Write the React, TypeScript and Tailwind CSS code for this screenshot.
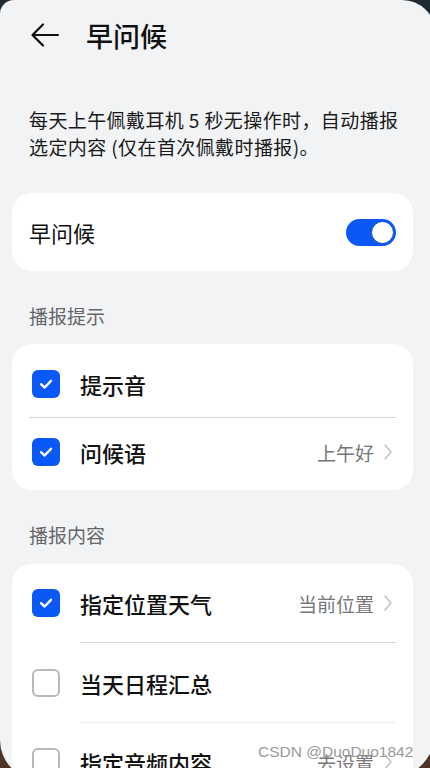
import React from "react";

const font = { fontFamily: '"Noto Sans CJK SC", "Noto Sans", sans-serif' };

function Check({ checked }: { checked: boolean }) {
  if (checked) {
    return (
      <div className="w-[28px] h-[28px] rounded-[6px] bg-[#0a59f7] flex items-center justify-center shrink-0">
        <svg width="18" height="18" viewBox="0 0 18 18" fill="none">
          <path d="M4 9.2 L7.6 12.5 L14 5.8" stroke="white" strokeWidth="2.4" strokeLinecap="round" strokeLinejoin="round" />
        </svg>
      </div>
    );
  }
  return <div className="w-[28px] h-[28px] rounded-[6px] border-2 border-[#b8b8b8] bg-white shrink-0" />;
}

function Chevron() {
  return (
    <svg width="10" height="18" viewBox="0 0 10 18" fill="none" className="ml-[9px]">
      <path d="M2 2 L8 9 L2 16" stroke="#c4c4c4" strokeWidth="1.6" strokeLinecap="round" strokeLinejoin="round" />
    </svg>
  );
}

function Row({ checked, label, value, h }: { checked: boolean; label: string; value?: string; h: string }) {
  return (
    <div className={`flex items-center pl-[20px] pr-[20px] ${h}`}>
      <Check checked={checked} />
      <span className="ml-[20px] text-[22px] font-medium text-[#111] leading-none">{label}</span>
      {value && (
        <div className="ml-auto flex items-center">
          <span className="text-[19px] text-[#777] leading-none">{value}</span>
          <Chevron />
        </div>
      )}
    </div>
  );
}

export default function App() {
  return (
    <div className="w-[430px] h-[768px] overflow-hidden bg-gradient-to-b from-[#1e2a34] via-[#2b2a2c] to-[#4e3426]" style={font}>
      <div className="relative w-[436px] h-[780px] bg-[#f1f3f5] rounded-tl-[14px] rounded-tr-[34px] rounded-bl-[40px] rounded-br-[50px] overflow-hidden">
        <div className="flex items-center h-[70px] pl-[30px]">
          <svg width="30" height="26" viewBox="0 0 30 26" fill="none">
            <path d="M28 13 H3 M13 2.5 L2.5 13 L13 23.5" stroke="#111" strokeWidth="2.2" strokeLinecap="round" strokeLinejoin="round" />
          </svg>
          <span className="ml-[26px] text-[27px] font-medium text-[#111] leading-none">早问候</span>
        </div>
        <p className="mt-[36px] px-[29px] text-[19px] leading-[27px] tracking-[0.4px] text-[#1a1a1a] whitespace-nowrap">
          <span className="block">每天上午佩戴耳机 5 秒无操作时，自动播报</span>
          <span className="block">选定内容 (仅在首次佩戴时播报)。</span>
        </p>
        <div className="mx-[12px] w-[401px] mt-[33px] h-[78px] rounded-[20px] bg-white flex items-center px-[17px]">
          <span className="text-[22px] text-[#111] leading-none">早问候</span>
          <div className="ml-auto w-[50px] h-[27px] rounded-full bg-[#0a59f7] flex items-center justify-end pr-[2px]">
            <div className="w-[23px] h-[23px] rounded-full bg-white border-[1.5px] border-[#0948c4]" />
          </div>
        </div>
        <div className="mt-[32px] px-[29px] text-[19px] text-[#666] leading-[25px] h-[25px]">播报提示</div>
        <div className="mx-[12px] w-[401px] mt-[16px] rounded-[20px] bg-white pt-[6px] pb-[4px]">
          <Row checked label="提示音" h="h-[67px]" />
          <div className="mx-[17px] h-px bg-[#d6d6d6]" />
          <Row checked label="问候语" value="上午好" h="h-[68px]" />
        </div>
        <div className="mt-[32px] px-[29px] text-[19px] text-[#666] leading-[25px] h-[25px]">播报内容</div>
        <div className="mx-[12px] w-[401px] mt-[17px] rounded-[20px] bg-white">
          <Row checked label="指定位置天气" value="当前位置" h="h-[78px]" />
          <div className="ml-[68px] mr-[17px] h-px bg-[#d6d6d6]" />
          <Row checked={false} label="当天日程汇总" h="h-[79px]" />
          <div className="ml-[68px] mr-[17px] h-px bg-[#eeeeee]" />
          <Row checked={false} label="指定音频内容" value="去设置" h="h-[78px]" />
        </div>
        <div className="absolute left-[258px] top-[744px] text-[15.5px] text-[#9a9a9a] leading-none" style={{ fontFamily: '"Liberation Sans", sans-serif' }}>
          CSDN @DuoDuo1842
        </div>
      </div>
    </div>
  );
}
